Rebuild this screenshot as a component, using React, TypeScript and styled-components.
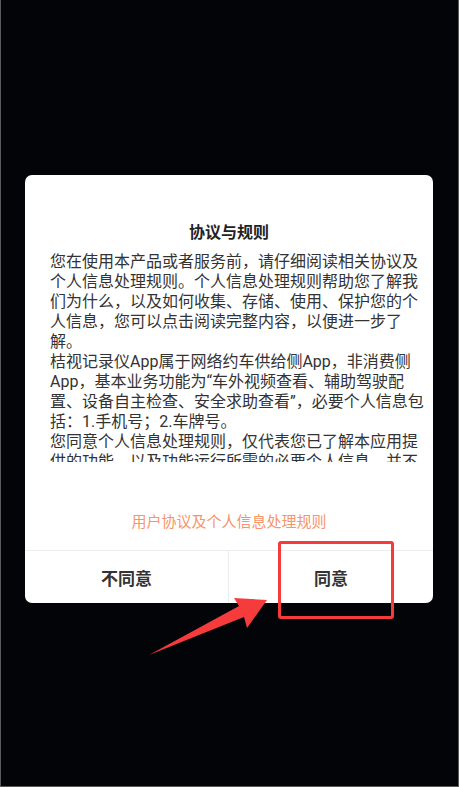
import React from "react";
import styled, { createGlobalStyle } from "styled-components";

const GlobalStyle = createGlobalStyle`
  * {
    box-sizing: border-box;
  }
  body {
    margin: 0;
    background: #030407;
    font-family: Roboto, "Noto Sans CJK SC", sans-serif;
  }
`;

const Screen = styled.div`
  position: relative;
  min-height: 787px;
  padding: 175px 0 0 24px;
  border: 1px solid #5a5a5a;
  border-top: none;
  background: #030407;
`;

const Dialog = styled.div`
  width: 408px;
  background: #fff;
  border-radius: 7px;
  display: flex;
  flex-direction: column;
`;

const Title = styled.h2`
  margin: 0;
  padding-top: 46px;
  height: 77px;
  line-height: 24px;
  text-align: center;
  font-size: 16px;
  font-weight: 700;
  color: #222;
`;

const Content = styled.div`
  height: 210px;
  overflow: hidden;
  padding: 0 19px 0 25px;
`;

const Paragraph = styled.p`
  margin: 0;
  font-size: 16px;
  line-height: 20px;
  color: #333;
`;

const Line = styled.span`
  display: block;
  white-space: nowrap;
`;

const PolicyLink = styled.a`
  display: block;
  margin-top: 50px;
  line-height: 20px;
  text-align: center;
  font-size: 15px;
  color: #f7956a;
  text-decoration: none;
`;

const Actions = styled.div`
  margin-top: 18px;
  display: grid;
  grid-template-columns: 1fr 1fr;
  border-top: 1px solid #ececec;
  height: 53px;
`;

const ActionButton = styled.button<{ $divider?: boolean }>`
  border: none;
  background: transparent;
  border-right: ${(p) => (p.$divider ? "1px solid #ececec" : "none")};
  font-family: inherit;
  font-size: 17px;
  font-weight: 700;
  color: #333;
  padding: 0;
  cursor: pointer;
`;

const Highlight = styled.div`
  position: absolute;
  left: 277px;
  top: 541px;
  width: 116px;
  height: 78px;
  border: 3px solid #f53b3b;
  border-radius: 3px;
  pointer-events: none;
`;

const Arrow = styled.svg`
  position: absolute;
  left: 0;
  top: 0;
  pointer-events: none;
`;

const paragraphs = [
  [
    "您在使用本产品或者服务前，请仔细阅读相关协议及",
    "个人信息处理规则。个人信息处理规则帮助您了解我",
    "们为什么，以及如何收集、存储、使用、保护您的个",
    "人信息，您可以点击阅读完整内容，以便进一步了",
    "解。",
  ],
  [
    "桔视记录仪App属于网络约车供给侧App，非消费侧",
    "App，基本业务功能为“车外视频查看、辅助驾驶配",
    "置、设备自主检查、安全求助查看”，必要个人信息包",
    "括：1.手机号；2.车牌号。",
  ],
  [
    "您同意个人信息处理规则，仅代表您已了解本应用提",
    "供的功能，以及功能运行所需的必要个人信息，并不",
    "代表您已同意我们可以收集非必要个人信息。",
  ],
];

export default function App() {
  return (
    <>
      <GlobalStyle />
      <Screen lang="zh-CN">
        <Dialog>
          <Title>协议与规则</Title>
          <Content>
            {paragraphs.map((lines, i) => (
              <Paragraph key={i}>
                {lines.map((line) => (
                  <Line key={line}>{line}</Line>
                ))}
              </Paragraph>
            ))}
          </Content>
          <PolicyLink href="#">用户协议及个人信息处理规则</PolicyLink>
          <Actions>
            <ActionButton $divider>不同意</ActionButton>
            <ActionButton>同意</ActionButton>
          </Actions>
        </Dialog>
        <Highlight />
        <Arrow width="459" height="787" viewBox="0 0 459 787">
          <polygon
            points="148,655 238,606 233,598 266,600 246,628 243,617"
            fill="#f53b3b"
          />
        </Arrow>
      </Screen>
    </>
  );
}
